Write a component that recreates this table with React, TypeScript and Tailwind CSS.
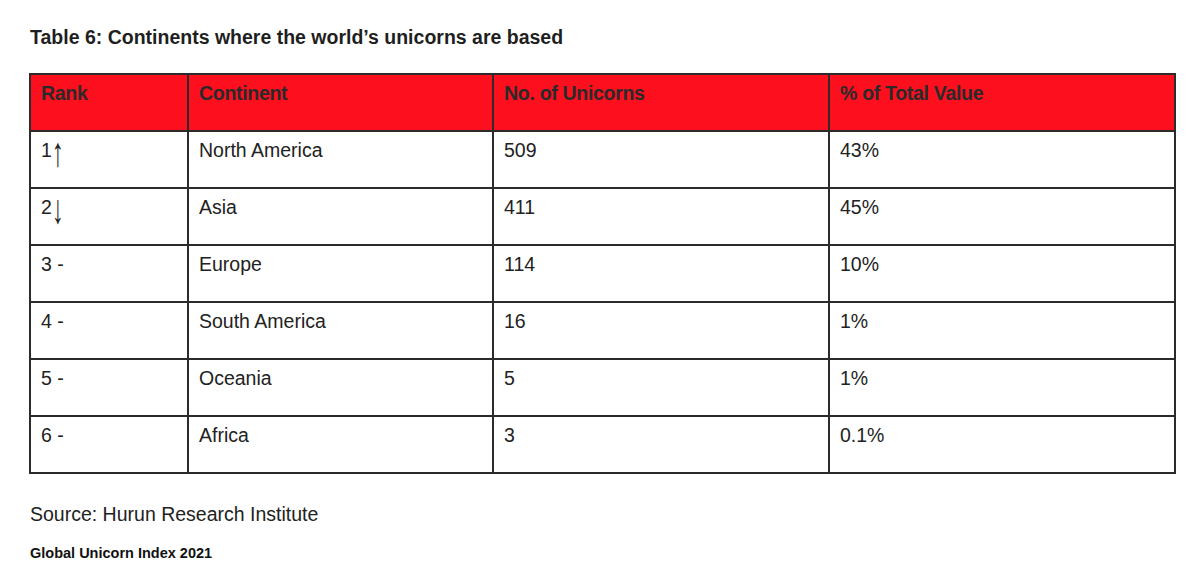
import React from "react";

const rows = [
  { rank: "1", arrow: "↑", continent: "North America", count: "509", share: "43%" },
  { rank: "2", arrow: "↓", continent: "Asia", count: "411", share: "45%" },
  { rank: "3 -", arrow: "", continent: "Europe", count: "114", share: "10%" },
  { rank: "4 -", arrow: "", continent: "South America", count: "16", share: "1%" },
  { rank: "5 -", arrow: "", continent: "Oceania", count: "5", share: "1%" },
  { rank: "6 -", arrow: "", continent: "Africa", count: "3", share: "0.1%" },
];

const headers = ["Rank", "Continent", "No. of Unicorns", "% of Total Value"];

const cell =
  "h-[57px] border-r-2 border-b-2 border-[#2b2b2b] pl-[10px] pt-[7px] text-[19.5px] leading-[22px]";

const App = () => {
  return (
    <div className="w-[1200px] h-[564px] bg-white pl-[29px] pt-[26px] text-[#222] font-['Liberation_Sans',Arial,sans-serif]">
      {/* Title */}
      <p className="pl-[1px] text-[19.5px] leading-[22px] font-bold text-[#1f1f1f]">
        Table 6: Continents where the world’s unicorns are based
      </p>

      {/* Table */}
      <div className="mt-[25px] w-[1147px] grid grid-cols-[158px_305px_336px_346px] border-t-2 border-l-2 border-[#2b2b2b]">
        {headers.map((h) => (
          <div key={h} className={`${cell} bg-[#fd0f1e] font-bold text-[#2a2a2a] tracking-[-0.3px]`}>
            {h}
          </div>
        ))}
        {rows.map((r) => (
          <React.Fragment key={r.rank}>
            <div className={cell}>
              {r.rank}
              {r.arrow && (
                <span className="inline-block ml-[1px] origin-[50%_7px] scale-x-[1.25] scale-y-[2.1] translate-y-[-3px]">
                  {r.arrow}
                </span>
              )}
            </div>
            <div className={cell}>{r.continent}</div>
            <div className={cell}>{r.count}</div>
            <div className={cell}>{r.share}</div>
          </React.Fragment>
        ))}
      </div>

      {/* Footer */}
      <p className="mt-[29px] pl-[1px] text-[19.5px] leading-[22px] text-[#222]">
        Source: Hurun Research Institute
      </p>
      <p className="mt-[20px] pl-[1px] text-[14.5px] leading-[16px] font-bold text-[#111]">
        Global Unicorn Index 2021
      </p>
    </div>
  );
};

export default App;
